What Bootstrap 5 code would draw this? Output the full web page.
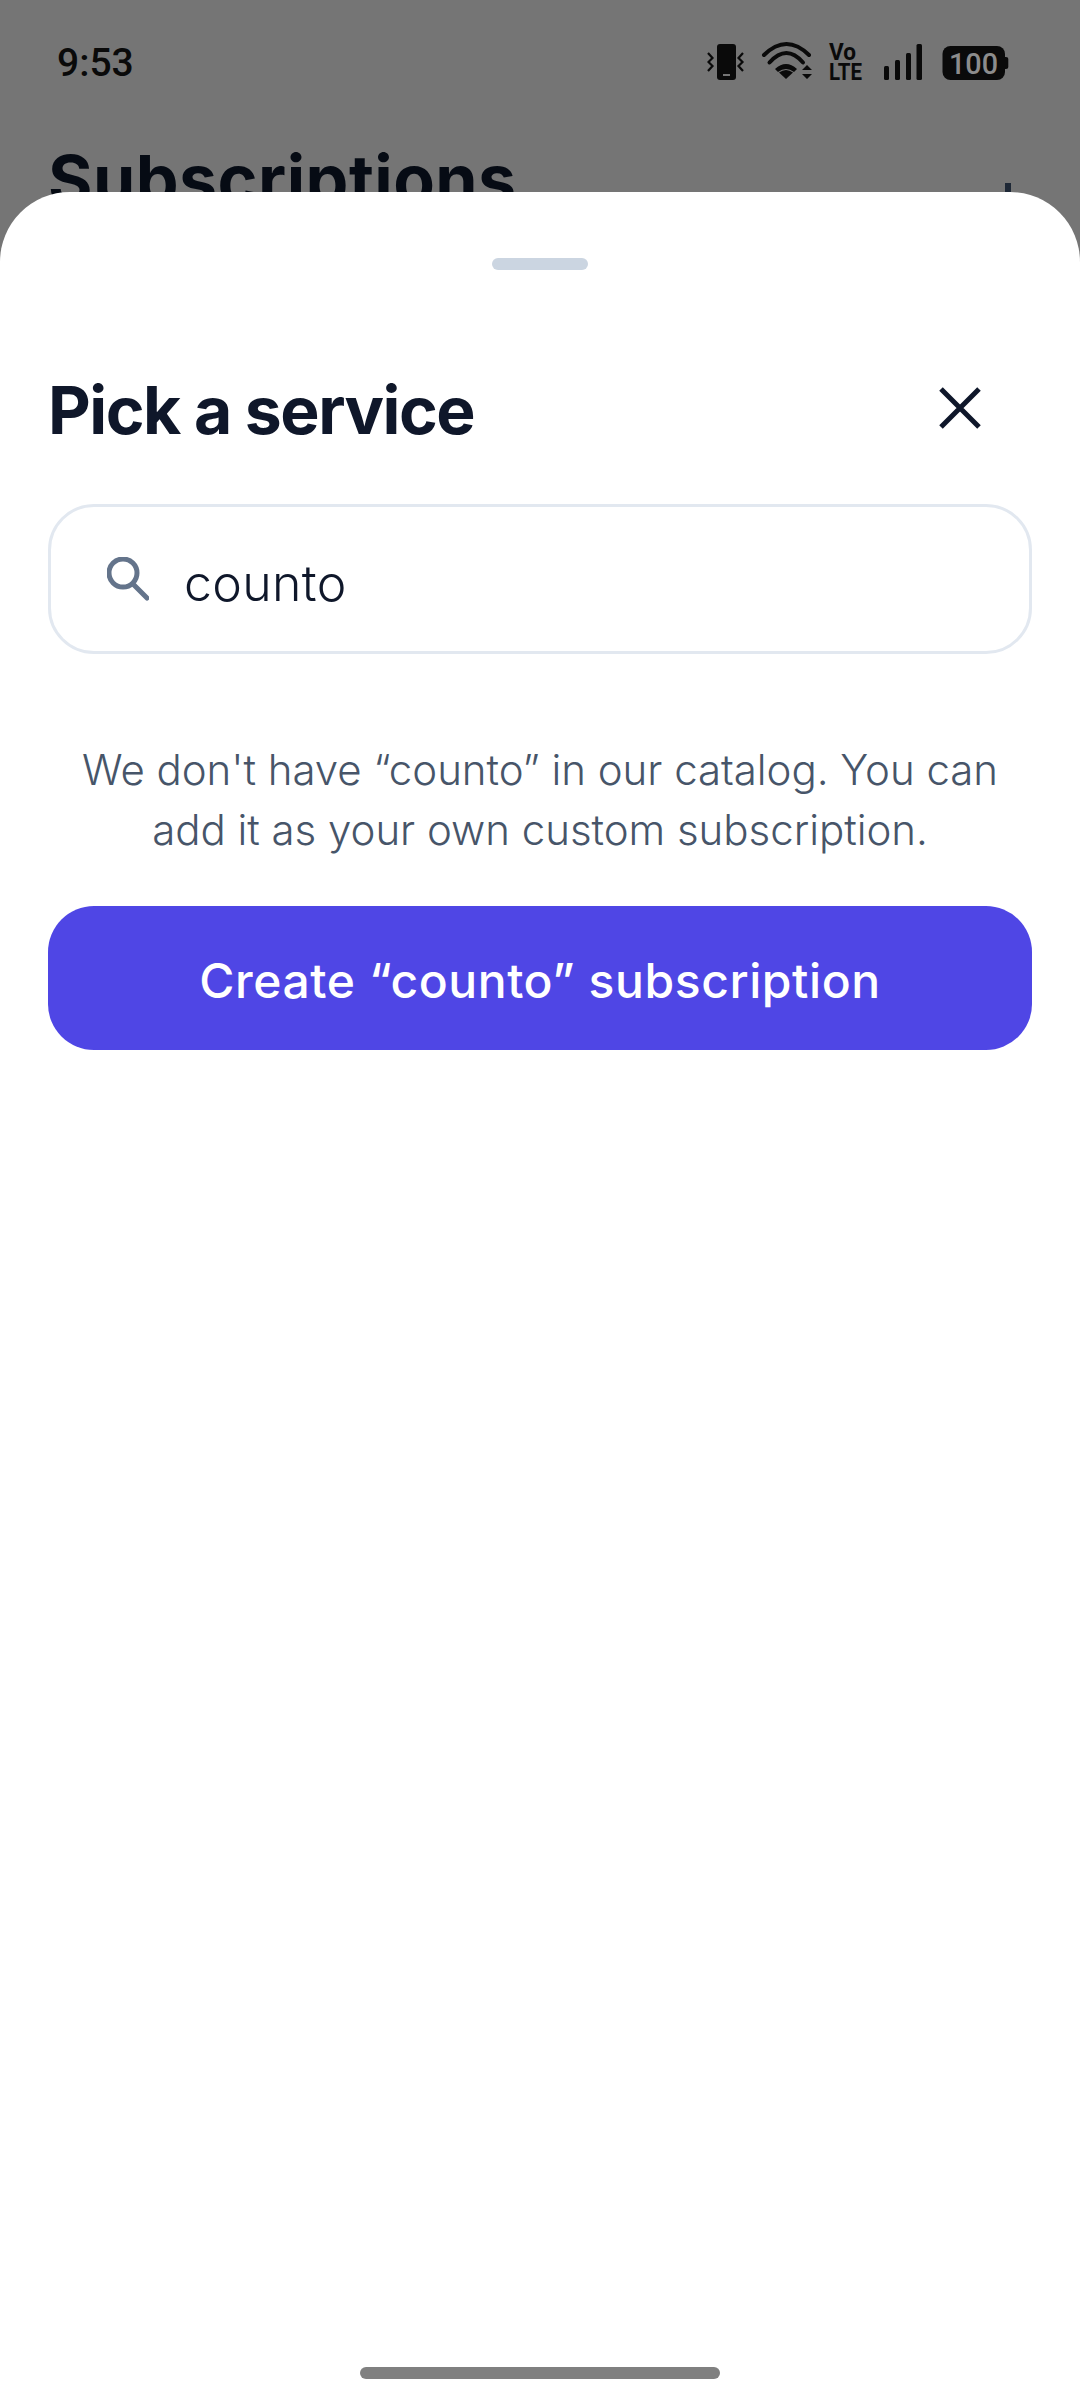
<!DOCTYPE html>
<html lang="en"><head><meta charset="utf-8"><title>Pick a service</title>
<link href="https://cdn.jsdelivr.net/npm/bootstrap@5.3.0/dist/css/bootstrap.min.css" rel="stylesheet">
<style>
html,body{margin:0;height:2400px;overflow:hidden;background:#757575}
body{font-family:Inter,"Liberation Sans",sans-serif;width:1080px}
.scr{height:2400px;position:relative;overflow:hidden}
.stbar{height:191px;padding:42px 60px 0 57px;color:#0a0a0a;font-family:Roboto,sans-serif}
.clock{font-size:39px;font-weight:500;line-height:42px}
.stat-ic{margin-top:-8px}
.stat-ic text{font-family:Roboto,sans-serif}
.bgtitle{position:absolute;left:48px;top:139px;font-size:68px;font-weight:700;color:#060b14;line-height:80px;letter-spacing:.45px}
.bgplus{position:absolute;left:1005px;top:183px;width:6px;height:9px;background:#1e2836}
.sheet{position:absolute;left:0;right:0;top:192px;bottom:0;background:#fff;border-radius:70px 70px 0 0;padding:0 48px}
.grab{width:96px;height:12px;border-radius:6px;background:#cbd5e1;margin:66px auto 0}
.ttl{font-size:66px;font-weight:700;color:#0f172a;margin:0;letter-spacing:-1.5px;line-height:80px}
.headrow{margin-top:100px;height:80px}
.closeic{margin:0 49px 5px 0}
.srch{height:150px;margin-top:54px;border:3px solid #e2e8f0;border-radius:46px;padding-left:56px;gap:35px}
.srch span{font-size:50px;font-weight:300;color:#0f172a;line-height:60px;letter-spacing:.35px;padding-top:8px}
.msg{font-size:42px;font-weight:300;line-height:60px;color:#475569;text-align:center;margin:86px 0 0;letter-spacing:-.03px}
.cta{display:block;width:100%;height:144px;margin-top:46px;border:0;border-radius:46px;background:#4f46e5;color:#fff;font-size:48px;font-weight:500;letter-spacing:.58px;padding-top:12px}
.cta:hover{background:#4f46e5;color:#fff}
.homebar{position:absolute;left:360px;top:2367px;width:360px;height:12px;border-radius:6px;background:#808080}
</style></head><body>
<div class="scr">
<div class="stbar d-flex justify-content-between align-items-start">
<div class="clock">9:53</div>
<svg class="stat-ic" width="313" height="56" viewBox="707 34 313 56" aria-hidden="true">
<g fill="#0a0a0a">
<rect x="717" y="44" width="19" height="36" rx="3"/>
<rect x="723" y="74" width="7" height="2" fill="#757575"/>
<g fill="none" stroke="#0a0a0a" stroke-width="2.2"><path d="M708 53l4.500 5-4 4 4 4-4.500 5"/><path d="M743 53l-4.500 5 4 4-4 4 4.500 5"/>
<g stroke-width="4" stroke-linecap="round"><path d="M764 55Q786.500 33 809 55"/><path d="M769.500 62.500Q786.500 43.500 803 62.500"/></g></g>
<path d="M775 69Q786 59 797 69l-3 3q-8-6-16 0z"/>
<path d="M786 79l-7-6.500q7-5 14 0z"/>
<path d="M807 65l5 5h-10zM807 79l5-5h-10z"/>
<text x="829" y="60" font-size="23" font-weight="700" textLength="27" lengthAdjust="spacingAndGlyphs">Vo</text>
<text x="829" y="80" font-size="23" font-weight="700" textLength="33" lengthAdjust="spacingAndGlyphs">LTE</text>
<rect x="884" y="66" width="5" height="14" rx="1.500"/><rect x="895" y="60" width="5" height="20" rx="1.500"/><rect x="906" y="53" width="5" height="27" rx="1.500"/><rect x="916.500" y="44" width="5.500" height="36" rx="1.500"/>
<rect x="942.500" y="46" width="62.500" height="34" rx="8"/><path d="M1005 57h1q2.300 0 2.300 2v8q0 2-2.300 2h-1z"/>
<text x="949" y="73.500" font-size="29" font-weight="500" fill="#8c8c8c" textLength="49" lengthAdjust="spacingAndGlyphs">100</text>
</g></svg>
</div>
<div class="bgtitle">Subscriptions</div><div class="bgplus"></div>
<div class="sheet">
<div class="grab"></div>
<div class="headrow d-flex justify-content-between align-items-center">
<h1 class="ttl">Pick a service</h1>
<svg class="closeic" width="46" height="46" viewBox="0 0 46 46" fill="none" stroke="#0f172a" stroke-width="5" aria-label="Close"><path d="M4 4 42 42M42 4 4 42"/></svg>
</div>
<div class="srch d-flex align-items-center">
<svg width="42" height="44" viewBox="0 0 42 44" fill="none" stroke="#64748b" stroke-width="5" stroke-linecap="round" aria-hidden="true"><circle cx="16" cy="16" r="14"/><path d="M26 27 40 41"/></svg>
<span>counto</span>
</div>
<p class="msg">We don't have “counto” in our catalog. You can<br>add it as your own custom subscription.</p>
<button class="cta btn" type="button">Create “counto” subscription</button>
</div>
<div class="homebar"></div>
</div>
</body></html>
